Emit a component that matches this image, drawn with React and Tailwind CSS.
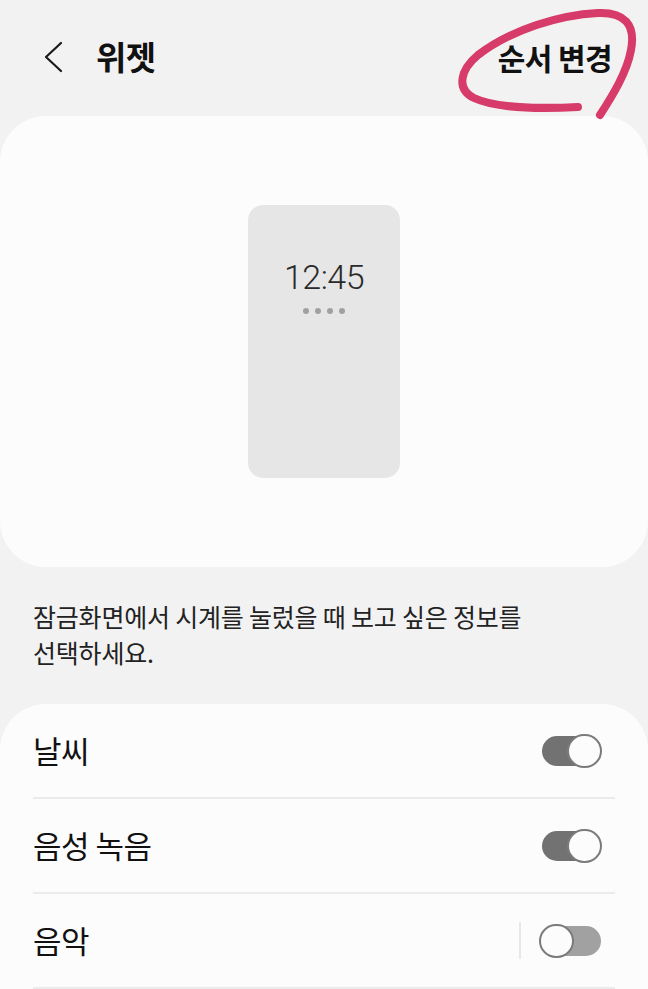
import React from "react";

const KR = { fontFamily: '"Noto Sans CJK KR", "Noto Sans", sans-serif' };

function Toggle({ on }) {
  return (
    <div className="relative w-[63px] h-[34px] shrink-0">
      <div
        className={
          "absolute left-[3px] right-[1px] top-[2px] h-[30px] rounded-full " +
          (on ? "bg-[#727272]" : "bg-[#a1a1a1]")
        }
      />
      <div
        className={
          "absolute top-0 w-[35px] h-[34px] rounded-full bg-[#fcfcfc] border-2 border-[#7b7b7b] " +
          (on ? "right-0" : "left-0")
        }
      />
    </div>
  );
}

function Row({ label, on, divider }) {
  return (
    <div className="h-[95px] flex items-center pr-[13px] border-b-2 border-[#ebebeb]">
      <span className="flex-1 text-[31px] tracking-[-0.5px] text-[#111]">{label}</span>
      {divider && <div className="w-[2px] h-[37px] bg-[#e8e8e8] mr-[18px]" />}
      <Toggle on={on} />
    </div>
  );
}

export default function App() {
  return (
    <div className="relative min-h-[989px] bg-[#f2f2f2] overflow-hidden" style={KR}>
      {/* header */}
      <div className="h-[116px] flex items-center justify-between pl-[42px] pr-[36px] pb-[2px]">
        <div className="flex items-center">
          <svg width="22" height="32" viewBox="0 0 22 32" className="mr-[32px]">
            <path d="M19 2 L4 16 L19 30" fill="none" stroke="#1a1a1a" strokeWidth="2.2" strokeLinecap="round" strokeLinejoin="round" />
          </svg>
          <span className="text-[33px] font-bold tracking-[-0.5px] text-[#111]">위젯</span>
        </div>
        <span className="text-[30px] font-semibold tracking-[-0.6px] text-[#111]">순서 변경</span>
      </div>

      {/* hand-drawn circle */}
      <svg className="absolute left-0 top-0 pointer-events-none" width="648" height="130" viewBox="0 0 648 130">
        <path
          d="M578 107 C540 109 495 108 474 98 C456 89 460 70 478 55 C512 29 560 15 598 13 C624 12 636 24 631 50 C627 72 613 95 600 115"
          fill="none"
          stroke="#d63b69"
          strokeWidth="8"
          strokeLinecap="round"
          strokeLinejoin="round"
        />
      </svg>

      {/* preview card */}
      <div className="h-[451px] bg-[#fcfcfc] rounded-[46px] flex items-center justify-center">
        <div className="w-[152px] h-[273px] bg-[#e6e6e6] rounded-[15px] flex flex-col items-center pt-[55px]">
          <span
            className="text-[34px] font-light leading-none tracking-[-0.5px] text-[#2a2a2a]"
            style={{ fontFamily: 'Roboto, "Noto Sans", sans-serif' }}
          >
            12:45
          </span>
          <div className="flex gap-[6px] mt-[14px]">
            <span className="w-[6px] h-[6px] rounded-full bg-[#a0a0a0]" />
            <span className="w-[6px] h-[6px] rounded-full bg-[#a0a0a0]" />
            <span className="w-[6px] h-[6px] rounded-full bg-[#a0a0a0]" />
            <span className="w-[6px] h-[6px] rounded-full bg-[#a0a0a0]" />
          </div>
        </div>
      </div>

      {/* description */}
      <p className="px-[33px] pt-[31px] pb-[34px] text-[25px] leading-[36px] tracking-[-0.2px] text-[#222]">
        잠금화면에서 시계를 눌렀을 때 보고 싶은 정보를
        <br />
        선택하세요.
      </p>

      {/* widget list */}
      <div className="bg-[#fcfcfc] rounded-t-[46px] px-[33px] min-h-[300px]">
        <Row label="날씨" on />
        <Row label="음성 녹음" on />
        <Row label="음악" on={false} divider />
      </div>
    </div>
  );
}
